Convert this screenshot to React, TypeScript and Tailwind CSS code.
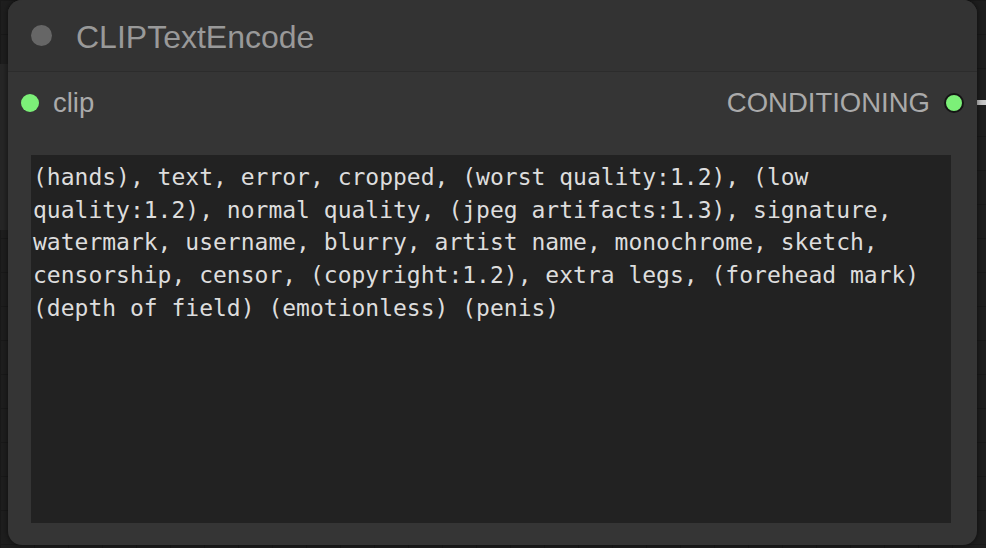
const lines = [
  '(hands), text, error, cropped, (worst quality:1.2), (low',
  'quality:1.2), normal quality, (jpeg artifacts:1.3), signature,',
  'watermark, username, blurry, artist name, monochrome, sketch,',
  'censorship, censor, (copyright:1.2), extra legs, (forehead mark)',
  '(depth of field) (emotionless) (penis)',
]

export default function App() {
  return (
    <div className="relative w-[986px] h-[548px] overflow-hidden bg-[#1e1e1e] bg-[linear-gradient(#191919_1px,transparent_1px),linear-gradient(90deg,#191919_1px,transparent_1px)] bg-[size:34px_34px]">
      {/* node partly hidden behind this one */}
      <div className="absolute left-0 top-[64px] w-[11px] h-[166px] bg-[#262626]" />
      {/* outgoing wire */}
      <div className="absolute left-[972px] top-[100px] w-[20px] h-[5px] bg-[#c8c8c8] rounded-full" />

      <div
        className="relative ml-[8px] w-[969px] h-[545px] rounded-[14px] bg-[#353535] shadow-[0_0_6px_rgba(0,0,0,0.6)] flex flex-col"
        style={{ fontFamily: '"Liberation Sans", Arial, sans-serif' }}
      >
        <div className="h-[72px] shrink-0 flex items-center rounded-t-[14px] bg-[#333333] border-b border-[#2c2c2c]">
          <div className="ml-[23px] w-[21px] h-[21px] rounded-full bg-[#666666]" />
          <span className="ml-[24px] pt-[3px] text-[32px] leading-none text-[#999999]">CLIPTextEncode</span>
        </div>

        <div className="h-[62px] shrink-0 flex items-center justify-between">
          <div className="flex items-center">
            <div className="ml-[13px] w-[18px] h-[18px] rounded-full bg-[#7cf078]" />
            <span className="ml-[14px] text-[27.5px] leading-none text-[#aaaaaa]">clip</span>
          </div>
          <div className="flex items-center">
            <span className="text-[27.5px] leading-none text-[#aaaaaa]">CONDITIONING</span>
            <div className="ml-[14px] mr-[13px] w-[20px] h-[20px] rounded-full bg-[#7cf078] border-[2px] border-[#151515]" />
          </div>
        </div>

        <div
          className="mt-[21px] ml-[23px] w-[920px] h-[368px] bg-[#222222] px-[2px] pt-[6px] text-[23px] leading-[32.7px] text-[#dddddd]"
          style={{ fontFamily: '"DejaVu Sans Mono", monospace' }}
        >
          {lines.map((l) => (
            <div key={l} className="whitespace-pre">{l}</div>
          ))}
        </div>
      </div>
    </div>
  )
}
